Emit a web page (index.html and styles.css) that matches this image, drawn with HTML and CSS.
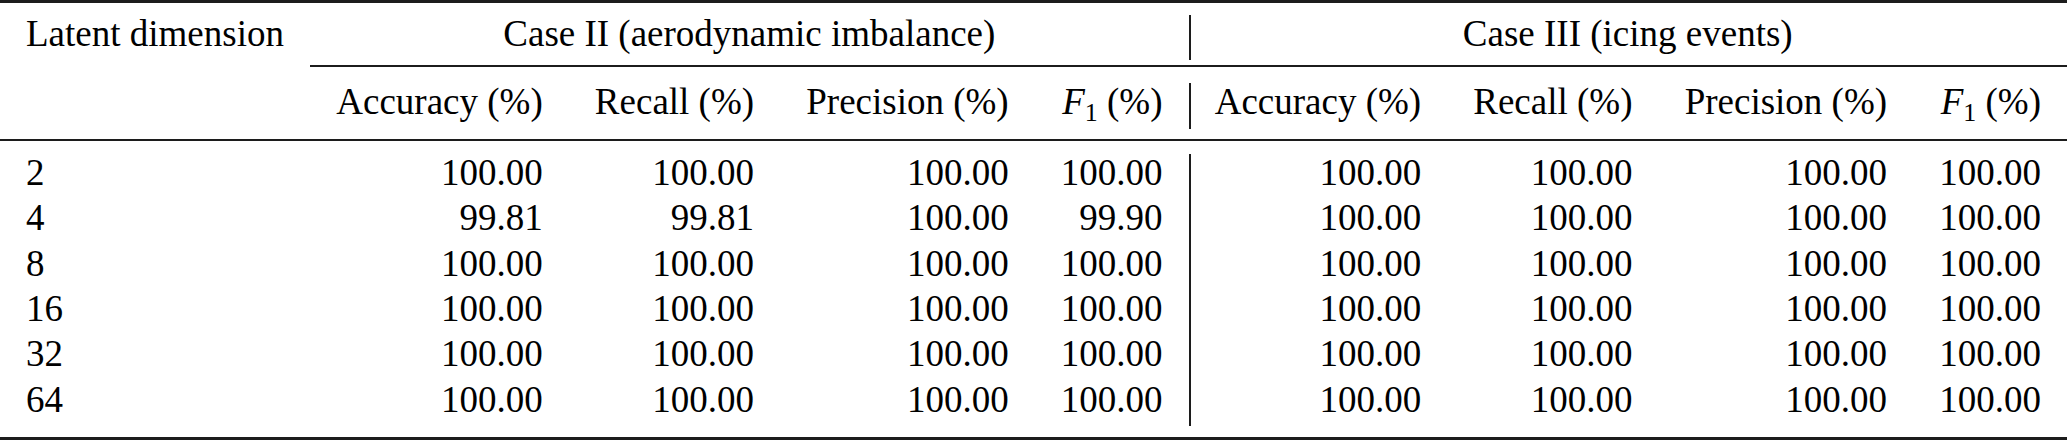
FILE: index.html
```html
<!DOCTYPE html>
<html lang="en">
<head>
<meta charset="utf-8">
<title>Latent dimension results</title>
<link rel="stylesheet" href="styles.css">
</head>
<body>
<table class="results">
  <tbody>
    <tr class="sep sep-top"><td colspan="9"><div class="rule rule-heavy"></div></td></tr>
    <tr class="row">
      <td class="label">Latent dimension</td>
      <td class="group" colspan="4">Case II (aerodynamic imbalance)</td>
      <td class="group divider" colspan="4">Case III (icing events)</td>
    </tr>
    <tr class="sep sep-cmid"><td></td><td colspan="8"><div class="rule rule-thin"></div></td></tr>
    <tr class="row head">
      <td class="label"></td>
      <td>Accuracy (%)</td>
      <td>Recall (%)</td>
      <td>Precision (%)</td>
      <td><i>F</i><sub>1</sub> (%)</td>
      <td class="divider">Accuracy (%)</td>
      <td>Recall (%)</td>
      <td>Precision (%)</td>
      <td><i>F</i><sub>1</sub> (%)</td>
    </tr>
    <tr class="sep sep-mid"><td colspan="9"><div class="rule rule-light"></div></td></tr>
    <tr class="row">
      <td class="label">2</td>
      <td>100.00</td><td>100.00</td><td>100.00</td><td>100.00</td>
      <td class="divider">100.00</td><td>100.00</td><td>100.00</td><td>100.00</td>
    </tr>
    <tr class="row">
      <td class="label">4</td>
      <td>99.81</td><td>99.81</td><td>100.00</td><td>99.90</td>
      <td class="divider">100.00</td><td>100.00</td><td>100.00</td><td>100.00</td>
    </tr>
    <tr class="row">
      <td class="label">8</td>
      <td>100.00</td><td>100.00</td><td>100.00</td><td>100.00</td>
      <td class="divider">100.00</td><td>100.00</td><td>100.00</td><td>100.00</td>
    </tr>
    <tr class="row">
      <td class="label">16</td>
      <td>100.00</td><td>100.00</td><td>100.00</td><td>100.00</td>
      <td class="divider">100.00</td><td>100.00</td><td>100.00</td><td>100.00</td>
    </tr>
    <tr class="row">
      <td class="label">32</td>
      <td>100.00</td><td>100.00</td><td>100.00</td><td>100.00</td>
      <td class="divider">100.00</td><td>100.00</td><td>100.00</td><td>100.00</td>
    </tr>
    <tr class="row">
      <td class="label">64</td>
      <td>100.00</td><td>100.00</td><td>100.00</td><td>100.00</td>
      <td class="divider">100.00</td><td>100.00</td><td>100.00</td><td>100.00</td>
    </tr>
    <tr class="sep sep-bottom"><td colspan="9"><div class="rule rule-heavy"></div></td></tr>
  </tbody>
</table>
</body>
</html>
```

FILE: styles.css
```css
html, body {
  margin: 0;
  padding: 0;
  background: #ffffff;
}

.results {
  border-collapse: separate;
  border-spacing: 0;
  font-family: "Liberation Serif", "Times New Roman", serif;
  font-size: 37px;
  color: #000000;
  width: 2067px;
}

.results td {
  padding: 0;
  vertical-align: top;
  white-space: nowrap;
}

.row td {
  padding: 0 26px 6.8px 26px;
  line-height: 38.6px;
  text-align: right;
}

.row td.label {
  text-align: left;
}

.row td.group {
  text-align: center;
}

.row td.divider {
  border-left: 2px solid #1c1c1c;
  padding-left: 24px;
}

.row i {
  font-style: italic;
}

.row sub {
  font-size: 0.7em;
  line-height: 0;
  vertical-align: -7px;
}

.sep td {
  line-height: 0;
  font-size: 0;
}

.sep-top td { height: 14.9px; }
.sep-cmid td { height: 22.9px; padding-top: 4.7px; box-sizing: border-box; }
.sep-mid td { height: 25.3px; padding-top: 10.9px; box-sizing: border-box; }
.sep-bottom td { height: 14.7px; padding-top: 10.7px; box-sizing: border-box; }

.rule {
  background: #1c1c1c;
}

.rule-heavy { height: 3px; }
.rule-light { height: 2px; }
.rule-thin { height: 2px; }
```
